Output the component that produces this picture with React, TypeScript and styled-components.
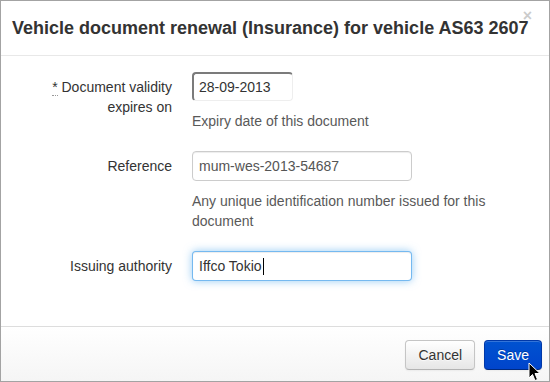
import React from "react";
import styled, { createGlobalStyle } from "styled-components";

const Global = createGlobalStyle`
  html, body { margin: 0; padding: 0; background: #fff; }
  body { font-family: "Liberation Sans", Arial, sans-serif; font-size: 14px; line-height: 20px; color: #333; }
  * { box-sizing: border-box; }
`;

const Modal = styled.div`
  position: relative;
  width: 550px;
  height: 382px;
  border: 1px solid #a3a3a3;
  background: #fff;
  display: flex;
  flex-direction: column;
  overflow: hidden;
`;

const Header = styled.div`
  position: relative;
  height: 55px;
  padding: 0 11px;
  border-bottom: 1px solid #e8e8e8;
  display: flex;
  align-items: center;
`;

const Title = styled.h3`
  margin: 0;
  font-size: 18px;
  font-weight: bold;
  line-height: 24px;
  color: #333;
  white-space: nowrap;
`;

const Close = styled.span`
  position: absolute;
  right: 17px;
  top: 5px;
  font-size: 16px;
  font-weight: bold;
  color: #000;
  opacity: 0.2;
  line-height: 20px;
`;

const Body = styled.div`
  flex: 1;
  padding: 16px 11px 0 11px;
`;

const Group = styled.div`
  display: grid;
  grid-template-columns: 160px 1fr;
  column-gap: 20px;
  margin-bottom: 20px;
`;

const Label = styled.label`
  text-align: right;
  padding-top: 5px;
  line-height: 20px;
  color: #333;
`;

const Req = styled.abbr`
  text-decoration: none;
  border-bottom: 1px dotted #999;
`;

const Controls = styled.div`
  display: flex;
  flex-direction: column;
  align-items: flex-start;
`;

const TextInput = styled.input`
  width: 220px;
  height: 30px;
  padding: 4px 6px;
  font: 14px/20px "Liberation Sans", Arial, sans-serif;
  color: #555;
  background: #fff;
  border: 1px solid #ccc;
  border-radius: 4px;
  box-shadow: inset 0 1px 1px rgba(0, 0, 0, 0.075);
  outline: none;
`;

const DateInput = styled(TextInput)`
  width: 101px;
  height: 29px;
  color: #333;
  border-style: solid;
  border-width: 2px 1px 1px 2px;
  border-color: #7b7b7b #eee #eee #7b7b7b;
  border-radius: 4px;
  box-shadow: none;
  padding: 3px 5px;
`;

const FocusField = styled.div`
  width: 220px;
  height: 30px;
  padding: 4px 6px;
  font: 14px/20px "Liberation Sans", Arial, sans-serif;
  color: #333;
  background: #fff;
  border: 1px solid rgba(82, 168, 236, 0.8);
  border-radius: 4px;
  box-shadow: inset 0 1px 1px rgba(0, 0, 0, 0.075), 0 0 8px rgba(82, 168, 236, 0.6);
  display: flex;
  align-items: center;
`;

const Caret = styled.span`
  display: inline-block;
  width: 1px;
  height: 17px;
  background: #000;
  margin-left: 1px;
`;

const Help = styled.span`
  display: block;
  margin-top: 10px;
  color: #595959;
  max-width: 320px;
`;

const Footer = styled.div`
  height: 55px;
  border-top: 1px solid #ddd;
  background: linear-gradient(#fff, #f5f5f5);
  display: flex;
  justify-content: flex-end;
  align-items: flex-start;
  gap: 9px;
  padding: 13px 7px 0 0;
`;

const Button = styled.button<{ $primary?: boolean }>`
  height: 30px;
  padding: 4px 12px;
  font: 14px/20px "Liberation Sans", Arial, sans-serif;
  border-radius: 4px;
  cursor: pointer;
  color: ${(p) => (p.$primary ? "#fff" : "#333")};
  text-shadow: ${(p) => (p.$primary ? "0 -1px 0 rgba(0,0,0,.25)" : "0 1px 1px rgba(255,255,255,.75)")};
  background: ${(p) => (p.$primary ? "linear-gradient(#0052d0, #0044cc)" : "linear-gradient(#fff, #e6e6e6)")};
  border: 1px solid ${(p) => (p.$primary ? "#0038a8" : "#c5c5c5")};
  border-bottom-color: ${(p) => (p.$primary ? "#002a80" : "#b3b3b3")};
  box-shadow: inset 0 1px 0 rgba(255, 255, 255, 0.2), 0 1px 2px rgba(0, 0, 0, 0.05);
`;

const Pointer = styled.svg`
  position: absolute;
  left: 527px;
  top: 361px;
`;

export default function App() {
  return (
    <>
      <Global />
      <Modal>
        <Header>
          <Title>Vehicle document renewal (Insurance) for vehicle AS63 2607</Title>
          <Close>×</Close>
        </Header>
        <Body>
          <Group>
            <Label>
              <Req title="required">*</Req> Document validity expires on
            </Label>
            <Controls>
              <DateInput readOnly defaultValue="28-09-2013" />
              <Help>Expiry date of this document</Help>
            </Controls>
          </Group>
          <Group>
            <Label>Reference</Label>
            <Controls>
              <TextInput readOnly defaultValue="mum-wes-2013-54687" />
              <Help>Any unique identification number issued for this document</Help>
            </Controls>
          </Group>
          <Group>
            <Label>Issuing authority</Label>
            <Controls>
              <FocusField>
                Iffco Tokio<Caret />
              </FocusField>
            </Controls>
          </Group>
        </Body>
        <Footer>
          <Button>Cancel</Button>
          <Button $primary>Save</Button>
        </Footer>
        <Pointer width="14" height="21" viewBox="0 0 14 21">
          <path d="M1 1 L1 16 L4.5 12.5 L7 18.5 L9.5 17.5 L7 11.5 L12 11.5 Z" fill="#000" stroke="#fff" strokeWidth="1" strokeLinejoin="round" />
        </Pointer>
      </Modal>
    </>
  );
}
